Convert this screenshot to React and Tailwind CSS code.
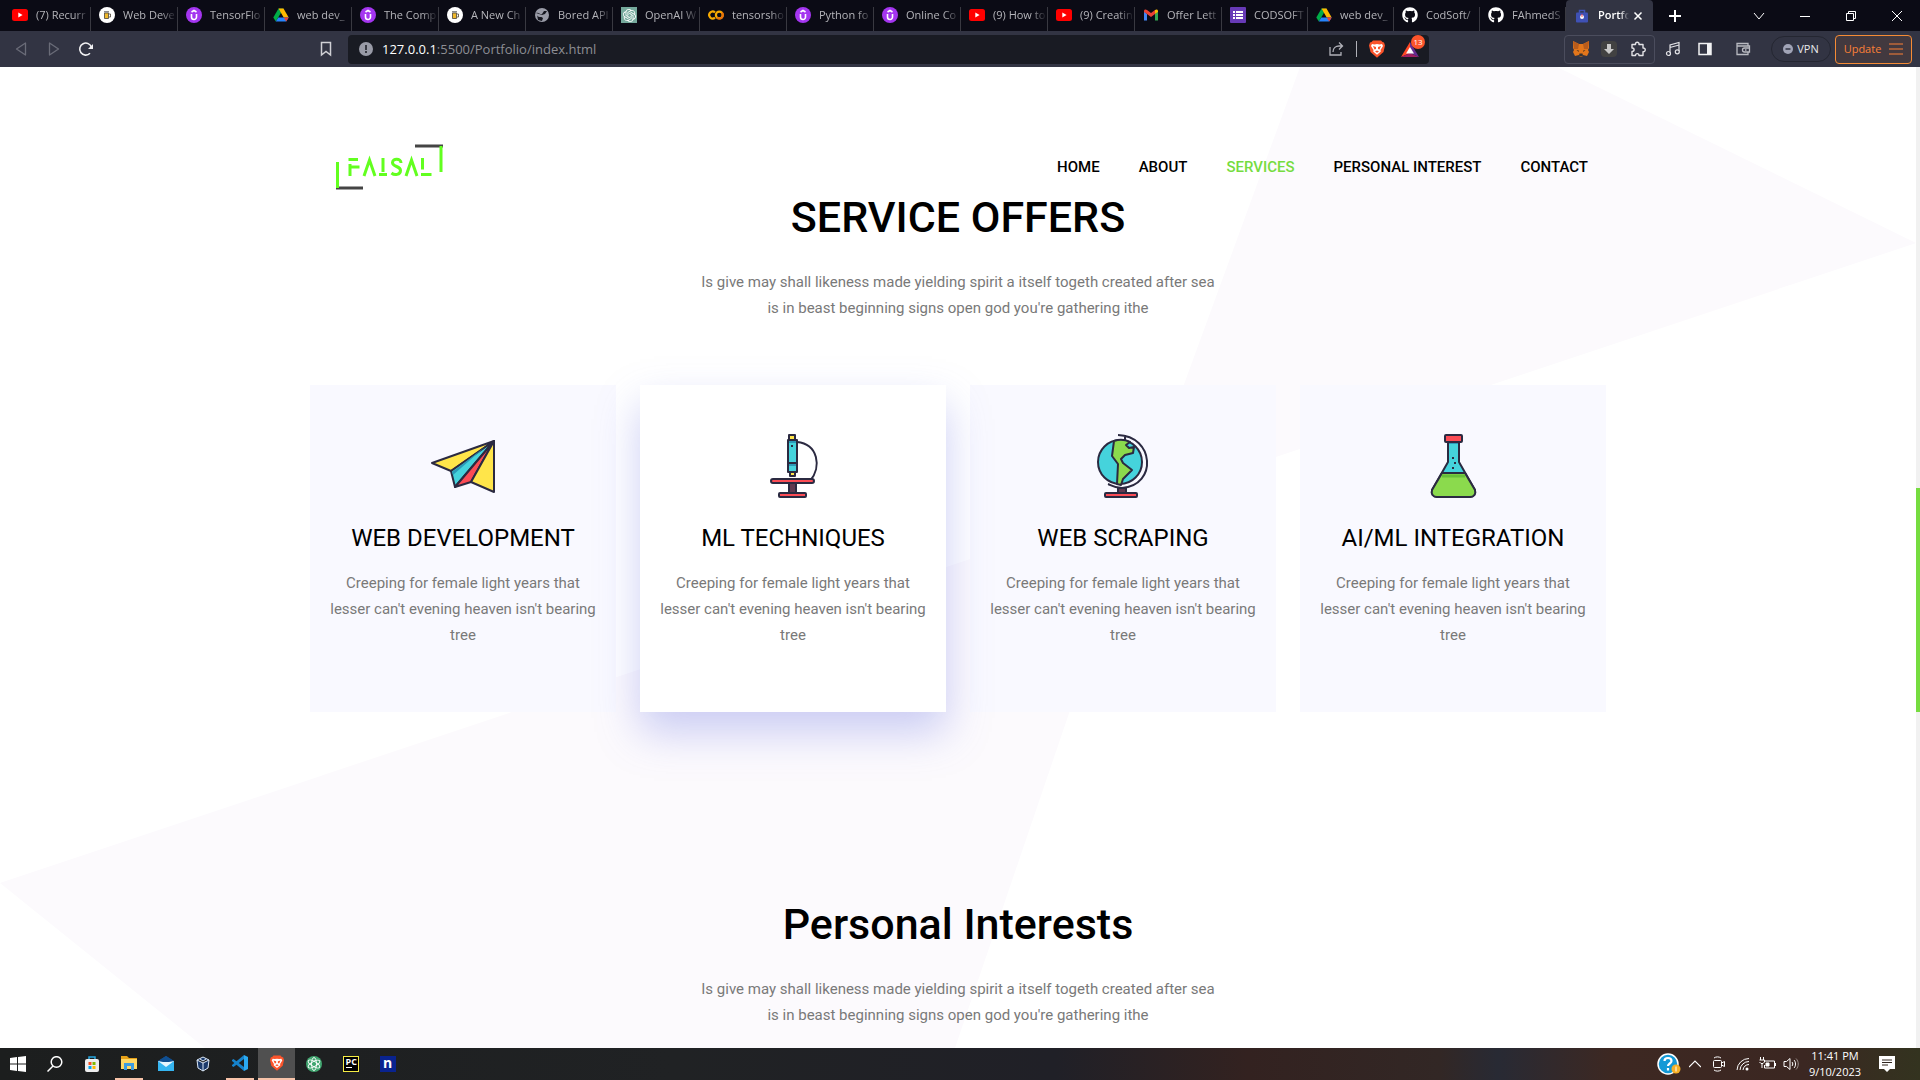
import React from "react";
import { FaGithub } from "react-icons/fa";
import { SiOpenai } from "react-icons/si";

const YouTube = () => (
  <svg viewBox="0 0 16 16" className="size-4 shrink-0"><rect y="2" width="16" height="12" rx="2.5" fill="#f00" /><path d="M6.3 5.5v5L10.6 8z" fill="#fff" /></svg>
);
const Beer = () => (
  <svg viewBox="0 0 16 16" className="size-4 shrink-0"><circle cx="8" cy="8" r="8" fill="#fff" /><path d="M5.500 6h4v5.500h-4z" fill="#f0b92c" stroke="#4a4438" strokeWidth=".8" /><path d="M10 7h1.500v3H10" fill="none" stroke="#4a4438" strokeWidth=".8" /><path d="M5 4.800h5" stroke="#777" strokeWidth="1.300" /></svg>
);
const Udemy = () => (
  <svg viewBox="0 0 16 16" className="size-4 shrink-0"><circle cx="8" cy="8" r="8" fill="#a435f0" /><path d="M5.500 7v3a2.500 2.500 0 0 0 5 0V7M5.500 5 8 3.500 10.500 5" fill="none" stroke="#fff" strokeWidth="1.600" /></svg>
);
const Drive = () => (
  <svg viewBox="0 0 16 16" className="size-4 shrink-0"><path d="M5.500 1.500h5L8 6z" fill="#188038" /><path d="M5.500 1.500 0.300 10.500 2.800 14.500 8 5.800z" fill="#00ac47" /><path d="M5.500 1.500h5l5.200 9h-5z" fill="#ffba00" /><path d="M5.300 10.500h10.400l-2.500 4H2.800z" fill="#2684fc" /><path d="M10.700 10.500h5l-2.500 4z" fill="#ea4335" /></svg>
);
const Globe = () => (
  <svg viewBox="0 0 16 16" className="size-4 shrink-0"><circle cx="8" cy="8" r="7" fill="#9a9ca8" /><path d="M2 6c3-1 4 2 6 1l2-3 3 0-2 3-3 1M3 8c1 3 4 1 6 3l-1 3-4-1z" fill="#15161f" /></svg>
);
const OpenAI = () => (
  <span className="flex size-4 shrink-0 items-center justify-center bg-[#75a99c] text-white"><SiOpenai size={13} /></span>
);
const Colab = () => (
  <svg viewBox="0 0 16 16" className="size-4 shrink-0" fill="none" strokeWidth="2.200"><path d="M7 5.300a3.500 3.500 0 1 0 0 5.400" stroke="#f9ab00" /><circle cx="11.300" cy="8" r="3.400" stroke="#f9ab00" /><path d="M9 10.500a3.400 3.400 0 0 0 4.800-5" stroke="#e8710a" /></svg>
);
const Gmail = () => (
  <svg viewBox="0 0 16 16" className="size-4 shrink-0"><path d="M1 4.500v9h3V7z" fill="#4285f4" /><path d="M15 4.500v9h-3V7z" fill="#34a853" /><path d="M1 4c0-1.500 1.500-2 3-1l4 3 4-3v4l-4 3-4-3-3-2z" fill="#ea4335" /><path d="M12 3c1.500-1 3-.5 3 1v1l-3 2z" fill="#fbbc04" /></svg>
);
const Forms = () => (
  <svg viewBox="0 0 16 16" className="size-4 shrink-0"><rect width="16" height="16" rx="1" fill="#673ab7" /><path d="M3 5h2M6 5h7M3 8h2M6 8h7M3 11h2M6 11h7" stroke="#fff" strokeWidth="1.800" /></svg>
);
const Github = () => <FaGithub className="size-4 shrink-0 text-white" />;
const Brief = () => (
  <svg viewBox="0 0 16 16" className="size-4 shrink-0"><path d="M5.500 5V2.500h5V5" fill="none" stroke="#3f51b5" strokeWidth="1.500" /><rect x="2" y="4.500" width="12" height="10" rx="1" fill="#3f51b5" /><circle cx="8" cy="9" r="2" fill="#fff" /><path d="M8 6v3" stroke="#f55" /></svg>
);

const tabs = [
  [YouTube, "(7) Recurr"],
  [Beer, "Web Deve"],
  [Udemy, "TensorFlo"],
  [Drive, "web dev_"],
  [Udemy, "The Comp"],
  [Beer, "A New Ch"],
  [Globe, "Bored API"],
  [OpenAI, "OpenAI W"],
  [Colab, "tensorsho"],
  [Udemy, "Python fo"],
  [Udemy, "Online Co"],
  [YouTube, "(9) How to"],
  [YouTube, "(9) Creatin"],
  [Gmail, "Offer Lett"],
  [Forms, "CODSOFT"],
  [Drive, "web dev_"],
  [Github, "CodSoft/"],
  [Github, "FAhmedS"],
];

function TabStrip() {
  return (
    <div className="flex h-[31px] items-end bg-[#0b0b15] pl-1 text-[12px] text-[#b5b5ba]">
      {tabs.map(([Icon, label], i) => (
        <button key={i} className={"flex h-6 shrink-0 items-start gap-2 border-r border-[#393941] pl-2 " + (i < 14 ? "w-[87px]" : "w-[86px]")}>
          <Icon />
          <span className="min-w-0 flex-1 overflow-hidden whitespace-nowrap text-left text-[11px] leading-4 [mask-image:linear-gradient(to_right,black_70%,transparent_100%)]">{label}</span>
        </button>
      ))}
      <div className="flex h-[31px] w-[87px] shrink-0 items-center gap-2 rounded-t bg-[#323443] px-2 text-white">
        <Brief />
        <button className="w-[31px] overflow-hidden whitespace-nowrap text-left text-[11px] font-semibold [mask-image:linear-gradient(to_right,black_70%,transparent)]">Portfo</button>
        <button aria-label="Close tab" className="-ml-1 shrink-0"><svg viewBox="0 0 10 10" className="size-[10px]" stroke="#fff" strokeWidth="1.500"><path d="m1.500 1.500 7 7m0-7-7 7" /></svg></button>
      </div>
      <button aria-label="New tab" className="flex h-[31px] w-11 items-center justify-center"><svg viewBox="0 0 12 12" className="size-3" stroke="#fff" strokeWidth="2"><path d="M6 0v12M0 6h12" /></svg></button>
      <div className="ml-auto flex h-[31px] items-center text-white">
        <button aria-label="Search tabs" className="flex w-[46px] justify-center"><svg viewBox="0 0 12 12" className="size-3" fill="none" stroke="#fff"><path d="m1 3 5 6 5-6" /></svg></button>
        <button aria-label="Minimize" className="flex w-[46px] justify-center"><svg viewBox="0 0 10 10" className="size-[10px]" stroke="#fff"><path d="M0 5.500h10" /></svg></button>
        <button aria-label="Restore" className="flex w-[46px] justify-center"><svg viewBox="0 0 10 10" className="size-[10px]" fill="none" stroke="#fff"><path d="M.5 2.500h7v7h-7zM2.500 2.500v-2h7v7h-2" /></svg></button>
        <button aria-label="Close" className="flex w-[46px] justify-center"><svg viewBox="0 0 10 10" className="size-[10px]" stroke="#fff"><path d="m0 0 10 10M10 0 0 10" /></svg></button>
      </div>
    </div>
  );
}

function Lion({ className }) {
  return (
    <svg viewBox="0 0 16 18" className={className}><path d="M4 .5h8l1.500 1.600 1.500.4 1 3-1.500 6.500L8 17.800 1.500 12 0 5.500l1-3L2.500 2z" fill="#fb542b" /><path d="m3 4 2.500.5L8 4l2.500.5L13 4l1 2-2.500 4 .3 1.500L8 14.800 4.200 11.500l.3-1.500L2 6z" fill="#fff" /><path d="m4 6 3 1v2l-1.500.5zM12 6 9 7v2l1.500.5zM6 11.500l2-1 2 1-2 1.300z" fill="#fb542b" /></svg>
  );
}

function Toolbar() {
  const plain = "flex items-center justify-center";
  return (
    <div className="flex h-9 items-center bg-[#323443] pr-2">
      <button aria-label="Back" className={plain + " w-[42px]"}><svg viewBox="0 0 14 16" className="h-4 w-3.5" fill="none" stroke="#6a6c78" strokeWidth="1.300"><path d="M11.500 2v12L2.500 8z" strokeLinejoin="round" /></svg></button>
      <button aria-label="Forward" className={plain + " w-6"}><svg viewBox="0 0 14 16" className="h-4 w-3.5" fill="none" stroke="#6a6c78" strokeWidth="1.300"><path d="M2.500 2v12l9-6z" strokeLinejoin="round" /></svg></button>
      <button aria-label="Reload" className={plain + " w-10"}><svg viewBox="0 0 16 16" className="size-4" fill="none" stroke="#f0f0f2" strokeWidth="1.600"><path d="M12 12.300a6 6 0 1 1 1.500-5.800" /><path d="M15 3v5H10z" fill="#f0f0f2" stroke="none" /></svg></button>
      <button aria-label="Bookmark" className={plain + " ml-[208px] w-6"}><svg viewBox="0 0 12 16" className="h-4 w-3" fill="none" stroke="#d0d0d5" strokeWidth="1.500"><path d="M1.500 1.500h9v12.500L6 10.500 1.500 14z" /></svg></button>
      <div className="ml-2.5 flex h-[29px] w-[1081px] min-w-0 items-center rounded bg-[#191b23] pl-[11px] pr-2">
        <svg viewBox="0 0 14 14" className="mr-[9px] size-3.5 shrink-0"><circle cx="7" cy="7" r="7" fill="#999ba7" /><path d="M7 3v5M7 9v2" stroke="#191b23" strokeWidth="1.500" /></svg>
        <div className="min-w-0 flex-1 text-[13px] leading-4 text-[#8d8e94]" role="textbox" aria-label="Address"><span className="text-white">127.0.0.1</span>:5500/Portfolio/index.html</div>
        <button aria-label="Share"><svg viewBox="0 0 16 16" className="size-4" fill="none" stroke="#b0b1b8" strokeWidth="1.300"><path d="M2 6v8h11v-3M5 11c0-4 3-6 6-6h3M11 1.500 14.500 5 11 8.500" /></svg></button>
        <span className="ml-3 mr-3 h-4 w-px bg-[#b0b1b8]" />
        <button aria-label="Shields"><Lion className="h-[18px] w-4" /></button>
        <button aria-label="Rewards" className="relative -mr-1 ml-4 h-5 w-6">
          <svg viewBox="0 0 24 20" className="h-5 w-6"><path d="M9 3 0 18l9-4z" fill="#ff4724" /><path d="m0 18 9-4 9 4z" fill="#9e1f63" /><path d="m9 3 9 15-9-4z" fill="#662d91" /><path d="m9 8-4 6.500h8z" fill="#fff" /></svg>
          <span className="absolute -top-1 right-0 flex size-3.5 items-center justify-center rounded-full bg-[#fb542b] text-[8px] leading-3 text-white">13</span>
        </button>
      </div>
      <div className="ml-auto flex h-[29px] w-[91px] items-center justify-around rounded border border-[#4b4d5d] px-0.5">
        <button aria-label="Wallet extension"><svg viewBox="0 0 16 16" className="size-4"><path d="m0 0 6 3h4l6-3v7l-1 2 1 2-2 4-4-1-1 2H7l-1-2-4 1-2-4 1-2-1-2z" fill="#e2761b" /><path d="m0 0 6 3-1 5H1zM16 0l-6 3 1 5h4z" fill="#b85c1c" /><path d="m6 14.500.5-2h3l.5 2-1 1H7z" fill="#333" /><path d="m3.500 9 2.500.7-.5 1zM12.500 9l-2.500.7.5 1z" fill="#222" /></svg></button>
        <button aria-label="Downloader" className="flex size-4 items-center justify-center rounded-sm bg-[#424242]"><svg viewBox="0 0 12 12" className="size-3"><path d="M4 1h4v5h3l-5 5-5-5h3z" fill="#c9c9c9" /></svg></button>
        <button aria-label="Extensions"><svg viewBox="0 0 16 16" className="size-4" fill="none" stroke="#e2e2e6" strokeWidth="1.400"><path d="M2 3.500h3.500C5 .5 9.500.5 9 3.500h4V7c3-.3 3 4 0 3.800v3.700H9c0-2.500-3.500-2.500-3.500 0H2v-4c2.800 0 2.800-3.500 0-3.500z" strokeLinejoin="round" /></svg></button>
      </div>
      <button aria-label="Media" className="ml-2.5"><svg viewBox="0 0 16 16" className="size-4" fill="none" stroke="#e2e2e6" strokeWidth="1.200"><path d="M5 12V4l9-2.500V10M5 6.500 14 4" /><circle cx="3.500" cy="12.500" r="2" /><circle cx="12.300" cy="10.800" r="2" /></svg></button>
      <button aria-label="Sidebar" className="ml-4"><svg viewBox="0 0 16 16" className="size-4"><path d="M2 2.500h12v11H2z" fill="none" stroke="#f2f2f4" strokeWidth="1.500" /><path d="M10 2h4v12h-4z" fill="#f2f2f4" /></svg></button>
      <button aria-label="Wallet" className="ml-[22px]"><svg viewBox="0 0 16 16" className="size-4" fill="none" stroke="#b9bac1" strokeWidth="1.300"><path d="M13 5V2.500H2v11h11V11M2 5h12.500v6H9.500a2 2 0 0 1 0-4h5" /><path d="M10 9h1.500" /></svg></button>
      <button className="ml-5 flex h-[26px] w-[60px] items-center justify-center gap-1 rounded-full border border-[#242631] text-[11px] text-[#e8e8eb]"><svg viewBox="0 0 10 10" className="size-2.5"><circle cx="5" cy="5" r="5" fill="#a1a4b7" /><path d="M2.500 5h5" stroke="#323443" strokeWidth="1.500" /></svg>VPN</button>
      <button className="ml-1 flex h-[29px] w-[77px] items-center justify-center gap-2 rounded border border-[#f58b35] bg-[#42393f] text-[11px] text-[#fb8037]">Update<svg viewBox="0 0 14 12" className="h-3 w-3.5" stroke="#fb8037" strokeWidth="1.200"><path d="M0 1h14M0 6h14M0 11h14" /></svg></button>
    </div>
  );
}

function Logo() {
  return (
    <svg viewBox="0 0 108 48" className="h-12 w-[108px]" fill="none" role="img" aria-label="Faisal">
      <path d="M79 3h28M0 45h27" stroke="#444" strokeWidth="3" />
      <path d="M105 3v26M1.500 19v26" stroke="#62ff1f" strokeWidth="3" />
      <g stroke="#62ff1f" strokeWidth="3">
        <path d="M14 33V21M12.500 16.500H22M14 24h9.500" />
        <path d="M28 33 33.500 17 39 33" />
        <path d="M47 15v14M43 31.500h8" />
        <path d="M65 20c0-5-8.500-5-8.500-.5 0 5 8 3 8 8 0 4.500-6 5-9 2.500" />
        <path d="M70 33 75.500 17 81 33" />
        <path d="M86.500 15v11.500M85 31.500h10.500" />
      </g>
    </svg>
  );
}

const Plane = () => (
  <svg viewBox="0 0 64 64" className="size-16" stroke="#2b2a41" strokeWidth="2" strokeLinejoin="round"><path d="M1 29 63 7 20 37z" fill="#ffe54a" /><path d="M63 7 20 37l4 16z" fill="#45d3dc" /><path d="m21 38 33-25-32 28z" fill="#2b9ab8" stroke="none" /><path d="M63 7 24 53l16-5z" fill="#fb4c55" /><path d="M63 7v51L40 48z" fill="#ffe54a" /></svg>
);
const Microscope = () => (
  <svg viewBox="-9 0 64 64" className="size-16" stroke="#2b2a41" strokeWidth="2" strokeLinejoin="round"><path d="M27 8c21 2 25 25 13 39" fill="none" /><path d="M19 1h6v5h-6zM20 38h5v4h-5z" fill="#ffe54a" /><path d="M18 6h9v32h-9z" fill="#45d3dc" /><path d="M19 8h7M19 31h7" stroke="#2b9ab8" /><path d="M18 29h9M21 12h2" /><rect x="19" y="49" width="7" height="10" fill="#603a50" /><rect x="1" y="45" width="43" height="4" rx="2" fill="#fb4c55" /><rect x="9" y="59" width="27" height="4" rx="1" fill="#fb4c55" /></svg>
);
const WorldGlobe = () => (
  <svg viewBox="0 0 64 64" className="size-16" stroke="#2b2a41" strokeWidth="2" strokeLinejoin="round"><path d="M27 1c36 1 40 50 4 53-8 0-11-3-14-4M34 1v5" fill="none" /><circle cx="29" cy="28" r="22" fill="#45d3dc" /><path d="M23 7c6-2 12-1 16 1l-4 3 3 3 5-1-1 6-8 2-4 4 2 4 9 7-9 9-2 6-4-1 1-20-6-8z" fill="#8bda4d" /><rect x="27" y="54" width="8" height="5" fill="#603a50" /><rect x="14" y="59" width="32" height="4" rx="1" fill="#fb4c55" /></svg>
);
const Flask = () => (
  <svg viewBox="0 0 64 64" className="size-16" stroke="#2b2a41" strokeWidth="2" strokeLinejoin="round"><path d="M27 7h11v21l16 28c1 4-1 7-5 7H16c-4 0-6-3-5-7l16-28z" fill="#45d3dc" /><path d="M21 39h23l10 17c1 4-1 7-5 7H16c-4 0-6-3-5-7z" fill="#8bda4d" /><path d="M21 42h23" stroke="#65be38" strokeWidth="3" /><path d="M28 9h9" stroke="#2b9ab8" /><path d="M31 24h2M33 29h2M31 34h2" /><rect x="24" y="1" width="17" height="7" rx="1" fill="#fb4c55" /></svg>
);

const services = [
  [Plane, "WEB DEVELOPMENT"],
  [Microscope, "ML TECHNIQUES"],
  [WorldGlobe, "WEB SCRAPING"],
  [Flask, "AI/ML INTEGRATION"],
];

function Heading({ children }) {
  return (
    <div className="text-center">
      <h2 className="text-[43px] font-medium leading-[52px] text-black">{children}</h2>
      <p className="mx-auto mt-[26px] w-[520px] max-w-full text-[15px] leading-[26px] text-[#797979]">Is give may shall likeness made yielding spirit a itself togeth created after sea is in beast beginning signs open god you're gathering ithe</p>
    </div>
  );
}

function Page() {
  const links = ["HOME", "ABOUT", "SERVICES", "PERSONAL INTEREST", "CONTACT"];
  return (
    <div className="relative flex-1 overflow-hidden bg-white font-[Roboto,sans-serif]">
      <svg viewBox="0 0 1916 981" preserveAspectRatio="none" className="absolute inset-0 h-full w-full" fill="#fcfafd"><path d="M1300 0h257l359 176-775 259zM0 816l1141-381-186 546H205z" /></svg>
      <div className="relative mx-auto max-w-[1296px] pt-[76px]">
        <header className="flex h-12 items-center justify-between pl-[26px] pr-[18px]">
          <a href="#home"><Logo /></a>
          <nav className="flex gap-[39px] text-[15px] font-medium text-black">
            {links.map((l) => <a key={l} href={"#" + l} className={l === "SERVICES" ? "text-[#76dc3f]" : ""}>{l}</a>)}
          </nav>
        </header>
        <Heading>SERVICE OFFERS</Heading>
        <div className="mt-16 grid grid-cols-4 gap-6">
          {services.map(([Icon, title], i) => (
            <article key={title} className={"flex h-[327px] flex-col items-center px-4 pt-[49px] text-center " + (i === 1 ? "z-10 bg-white shadow-[0_20px_40px_rgba(110,118,225,0.35)]" : "bg-[#f9f9ff]")}>
              <Icon />
              <h3 className="mt-6 text-[24px] leading-8 text-black">{title}</h3>
              <p className="mt-4 text-[15px] leading-[26px] text-[#797979]">Creeping for female light years that lesser can't evening heaven isn't bearing tree</p>
            </article>
          ))}
        </div>
        <div className="pt-[186px]"><Heading>Personal Interests</Heading></div>
      </div>
    </div>
  );
}

function Taskbar() {
  const cell = "flex h-8 w-[37px] items-center justify-center";
  return (
    <footer className="flex h-8 shrink-0 items-center bg-[linear-gradient(to_right,#1c1e1e_0%,#202224_35%,#202027_55%,#332220_65%,#322725_75%,#282a34_78%,#3d2822_84%,#3b2722_94%,#33331f_100%)] font-['Open_Sans',sans-serif] text-[12px] text-white">
      <button aria-label="Start" className="flex h-8 w-9 items-center justify-center"><svg viewBox="0 0 16 16" className="size-4" fill="#fff"><path d="m0 2 7-1v6.500H0zM8 1l8-1v7.500H8zM0 8.500h7V15l-7-1zM8 8.500h8V16l-8-1z" /></svg></button>
      <button aria-label="Search" className={cell}><svg viewBox="0 0 16 16" className="size-4" fill="none" stroke="#fff" strokeWidth="1.500"><circle cx="9.500" cy="6" r="5.300" /><path d="m6 10-5.500 5.500" /></svg></button>
      <button aria-label="Store" className={cell}><svg viewBox="0 0 16 16" className="size-4"><path d="M5 4V1h6v3" fill="none" stroke="#27a7df" strokeWidth="1.500" /><rect x="1" y="3" width="14" height="13" rx="2" fill="#eee" /><path d="M4.500 6h3v3h-3z" fill="#f25022" /><path d="M8.500 6h3v3h-3z" fill="#7fba00" /><path d="M4.500 10h3v3h-3z" fill="#00a4ef" /><path d="M8.500 10h3v3h-3z" fill="#ffb900" /></svg></button>
      <button aria-label="File Explorer" className={cell}><span className="flex h-8 w-7 items-center justify-center border-b-2 border-[#f7c3a9]"><svg viewBox="0 0 16 16" className="size-4"><path d="M0 1h6l2 2h8v11H0z" fill="#e6a117" /><path d="M0 4h16v10H0z" fill="#ffd765" /><path d="M3 15V8h10v7h-3v-4H6v4z" fill="#3d9ce0" /></svg></span></button>
      <button aria-label="Mail" className={cell}><svg viewBox="0 0 16 16" className="size-4"><path d="m0 5 8-5 8 5v10H0z" fill="#104f91" /><path d="M0 5h16v9H0z" fill="#e8f7ff" /><path d="m0 5 8 6 8-6v10H0z" fill="#35b5f1" /><path d="m0 5 8-5 8 5-5 1H5z" fill="#104f91" /></svg></button>
      <button aria-label="VirtualBox" className={cell}><svg viewBox="0 0 16 16" className="size-4" fill="#1b3a6b" stroke="#dce8f7"><path d="m8 1 6 3-1 8-5 3-5-3-1-8zM2 4l6 3 6-3M8 7v8" /><path d="m5 3 3 2 3-2" /></svg></button>
      <button aria-label="Visual Studio Code" className={cell}><span className="flex h-8 w-7 items-center justify-center border-b-2 border-[#f7c3a9]"><svg viewBox="0 0 16 16" className="size-4"><path d="m0 5 1.500-1L12 12v4L0 6z" fill="#1683cc" /><path d="m0 11 1.500 1L12 4V0L0 10z" fill="#1683cc" /><path d="m12 0 4 2v12l-4 2z" fill="#2baaf2" /></svg></span></button>
      <button aria-label="Brave" className={cell + " border-b-2 border-[#f7c3a9] bg-[#505050]"}><Lion className="h-4 w-3.5" /></button>
      <button aria-label="Atom" className={cell}><svg viewBox="0 0 16 16" className="size-4"><circle cx="8" cy="8" r="8" fill="#41a670" /><g fill="none" stroke="#fff" strokeWidth=".9"><ellipse cx="8" cy="8" rx="2.500" ry="6.500" /><ellipse cx="8" cy="8" rx="2.500" ry="6.500" transform="rotate(60 8 8)" /><ellipse cx="8" cy="8" rx="2.500" ry="6.500" transform="rotate(120 8 8)" /></g></svg></button>
      <button aria-label="PyCharm" className={cell}><span className="flex size-4 flex-col items-start border border-[#f5ec45] bg-black pl-0.5 text-[9px] font-bold leading-[10px]">PC<span className="h-px w-1.5 bg-white" /></span></button>
      <button aria-label="Notes" className={cell}><span className="flex size-4 items-center justify-center bg-[#09238f] pb-0.5 text-[14px] font-bold leading-4">n</span></button>
      <div className="ml-auto flex h-8 items-center">
        <svg viewBox="0 0 24 22" className="h-[22px] w-6"><circle cx="11" cy="11" r="10" fill="#1399d6" stroke="#fff" strokeWidth="1.500" /><path d="M7.500 8c0-4 7-4 7 0 0 2.500-3.500 2.500-3.500 5M11 15v2.500" fill="none" stroke="#fff" strokeWidth="2.200" /><circle cx="19" cy="16" r="4.500" fill="#f5af26" /><path d="M19 13.500v5" stroke="#fff" /></svg>
        <svg viewBox="0 0 12 12" className="ml-2 size-3" fill="none" stroke="#fff" strokeWidth="1.200"><path d="m0 9 6-6 6 6" /></svg>
        <svg viewBox="0 0 16 16" className="ml-2.5 size-4" fill="none" stroke="#fff"><rect x="2.500" y="4.500" width="8" height="7" rx="1" /><path d="m10.500 7 3-1.500v5L10.500 9M3 2C5 .5 8 .5 10 2M3 14c2 1.500 5 1.500 7 0" /></svg>
        <svg viewBox="0 0 16 16" className="ml-2 size-4" fill="none" stroke="#fff"><path d="M2 14A12 12 0 0 1 14 2.500M5 14a9 9 0 0 1 9-8.500M8 14a6 6 0 0 1 6-5.500" /><circle cx="12" cy="13" r="1.500" fill="#fff" stroke="none" /></svg>
        <svg viewBox="0 0 18 16" className="ml-2 h-4 w-[18px]" fill="none" stroke="#fff"><path d="M5 5h10.500v7H5.500V9M16.500 7v3" /><path d="M7 7h3v3H7z" fill="#fff" /><path d="M1.500 1v3M4.500 1v3M.5 4h5v2l-1.500 1.500H2L.5 6M3 7.500V12" /></svg>
        <svg viewBox="0 0 16 16" className="ml-1.5 size-4" fill="none" stroke="#fff"><path d="M1 5.500h2.500L7 2.500v11l-3.500-3H1zM9 6c1 1 1 3 0 4M11 4c2 2 2 6 0 8" /><path d="M13 2.500c3 3 3 8 0 11" stroke="#9a8e8a" /></svg>
        <div className="ml-1.5 w-[60px] text-center text-[11px] leading-4"><div>11:41 PM</div><div>9/10/2023</div></div>
        <button aria-label="Notifications" className="ml-[14px] mr-[25px]"><svg viewBox="0 0 16 16" className="size-4"><path d="M0 0h16v13h-5l-3 3-3-3H0z" fill="#fff" /><path d="M3 4h10M3 6.500h10M3 9h6" stroke="#30261f" /></svg></button>
      </div>
    </footer>
  );
}

export default function App() {
  return (
    <div className="flex h-screen flex-col overflow-hidden font-['Open_Sans',sans-serif]">
      <TabStrip />
      <Toolbar />
      <main className="flex min-h-0 flex-1">
        <Page />
        <div className="flex w-1 shrink-0 flex-col bg-[#f1f1f1] pt-[421px]"><div className="h-[224px] bg-[#76dc3f]" /></div>
      </main>
      <Taskbar />
    </div>
  );
}
